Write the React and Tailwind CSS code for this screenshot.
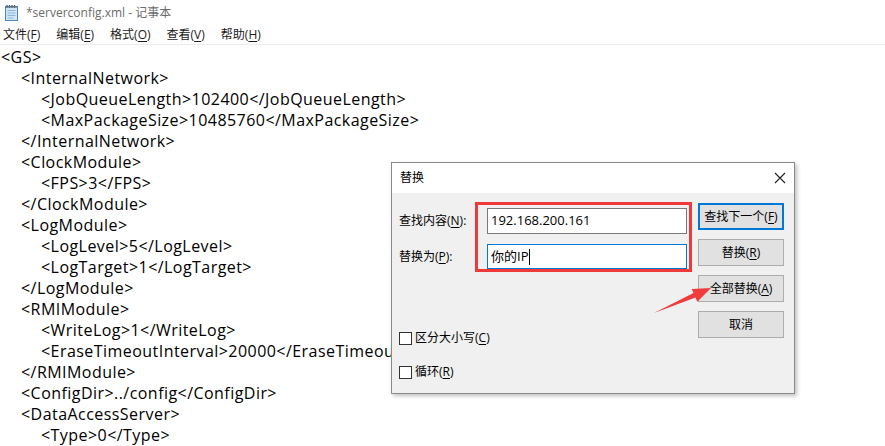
import React from 'react';

const ui = { fontFamily: '"Open Sans", "Noto Sans CJK SC", sans-serif' };

const xml = [
  [0, '<GS>'],
  [1, '<InternalNetwork>'],
  [2, '<JobQueueLength>102400</JobQueueLength>'],
  [2, '<MaxPackageSize>10485760</MaxPackageSize>'],
  [1, '</InternalNetwork>'],
  [1, '<ClockModule>'],
  [2, '<FPS>3</FPS>'],
  [1, '</ClockModule>'],
  [1, '<LogModule>'],
  [2, '<LogLevel>5</LogLevel>'],
  [2, '<LogTarget>1</LogTarget>'],
  [1, '</LogModule>'],
  [1, '<RMIModule>'],
  [2, '<WriteLog>1</WriteLog>'],
  [2, '<EraseTimeoutInterval>20000</EraseTimeoutInterval>'],
  [1, '</RMIModule>'],
  [1, '<ConfigDir>../config</ConfigDir>'],
  [1, '<DataAccessServer>'],
  [2, '<Type>0</Type>'],
];

const indents = ['pl-[1px]', 'pl-[21px]', 'pl-[41px]'];

function Key({ label, k }) {
  return (
    <span>
      {label}(<span className="underline underline-offset-2">{k}</span>)
    </span>
  );
}

function NotepadIcon() {
  return (
    <svg width="15" height="17" viewBox="0 0 15 17" className="shrink-0">
      <rect x="1.5" y="2.5" width="12" height="14" fill="#cfe6f5" stroke="#4f87b8" />
      <path d="M3.5 6.5h8M3.5 9h8M3.5 11.5h8M3.5 14h6" stroke="#8db6d6" />
      <path d="M3 1v3M5.5 1v3M8 1v3M10.5 1v3" stroke="#3a4b5c" strokeWidth="1.2" />
      <rect x="1.5" y="2" width="12" height="1.5" fill="#5d7285" />
    </svg>
  );
}

function DlgButton({ children, focused }) {
  return (
    <button
      className={`flex h-[27px] w-[86px] items-center justify-center bg-[#e1e1e1] text-[12px] text-black ${
        focused ? 'border-2 border-[#0078d7]' : 'border border-[#adadad]'
      }`}
    >
      {children}
    </button>
  );
}

function Check({ children }) {
  return (
    <label className="flex h-[14px] items-center gap-[3px] text-[12px] leading-[14px] text-black">
      <span className="h-[13px] w-[13px] shrink-0 border border-[#333] bg-white" />
      {children}
    </label>
  );
}

export default function App() {
  return (
    <div className="relative h-[446px] w-[885px] overflow-hidden bg-white" style={ui}>
      <div className="flex h-[25px] items-center gap-[7px] pl-[4px] text-[12px] text-[#6b6b6b]">
        <NotepadIcon />
        <span>*serverconfig.xml - 记事本</span>
      </div>
      <div className="flex h-[19px] items-center gap-[16px] pl-[3px] text-[12px] text-[#1a1a1a]">
        <Key label="文件" k="F" />
        <Key label="编辑" k="E" />
        <Key label="格式" k="O" />
        <Key label="查看" k="V" />
        <Key label="帮助" k="H" />
      </div>
      <div className="h-[1px] bg-[#ececec]" />

      <div className="pt-[2px] text-[16px] leading-[21px] tracking-[0.45px] text-black">
        {xml.map(([lvl, t], i) => (
          <div key={i} className={`whitespace-pre ${indents[lvl]}`}>
            {t}
          </div>
        ))}
      </div>

      {/* Replace dialog, lying over the editor */}
      <div className="absolute left-[391px] top-[162px] flex h-[232px] w-[404px] flex-col border border-[#8a8a8a] bg-[#f0f0f0] shadow-[2px_2px_4px_rgba(0,0,0,0.25)]">
        <div className="flex h-[30px] items-center justify-between bg-white pl-[8px] pr-[8px] text-[12px] text-black">
          <span>替换</span>
          <svg width="12" height="12" viewBox="0 0 12 12">
            <path d="M1 1l10 10M11 1L1 11" stroke="#222" strokeWidth="1.1" />
          </svg>
        </div>
        <div className="flex flex-1 pl-[7px] pt-[10px] text-[12px] text-black">
          <div className="flex w-[288px] flex-col">
            <div className="mt-[5px] flex items-center">
              <span className="w-[88px]">
                查找内容(<span className="underline underline-offset-2">N</span>):
              </span>
              <div className="flex h-[26px] w-[200px] items-center border border-[#7a7a7a] bg-white pl-[3px] text-[13px]">
                192.168.200.161
              </div>
            </div>
            <div className="mt-[10px] flex items-center">
              <span className="w-[88px]">
                替换为(<span className="underline underline-offset-2">P</span>):
              </span>
              <div className="flex h-[25px] w-[200px] items-center border border-[#0078d7] bg-white pl-[3px] text-[13px]">
                你的IP
                <span className="ml-[1px] h-[16px] w-[1px] bg-black" />
              </div>
            </div>
            <div className="mt-[62px] flex flex-col gap-[20px]">
              <Check>
                <Key label="区分大小写" k="C" />
              </Check>
              <Check>
                <Key label="循环" k="R" />
              </Check>
            </div>
          </div>
          <div className="ml-[11px] flex flex-col gap-[9px]">
            <DlgButton focused>
              <Key label="查找下一个" k="F" />
            </DlgButton>
            <DlgButton>
              <Key label="替换" k="R" />
            </DlgButton>
            <DlgButton>
              <Key label="全部替换" k="A" />
            </DlgButton>
            <DlgButton>取消</DlgButton>
          </div>
        </div>
      </div>

      {/* annotation: red box around inputs */}
      <div className="pointer-events-none absolute left-[475px] top-[202px] h-[70px] w-[217px] border-[3px] border-[#f03a3a]" />

      {/* annotation arrow */}
      <svg className="pointer-events-none absolute left-0 top-0" width="885" height="446">
        <polygon
          points="654,313 693.5,293 691.7,288.9 711,288 697.3,301.7 695.5,297.6"
          fill="#ef3b3b"
        />
      </svg>
    </div>
  );
}
